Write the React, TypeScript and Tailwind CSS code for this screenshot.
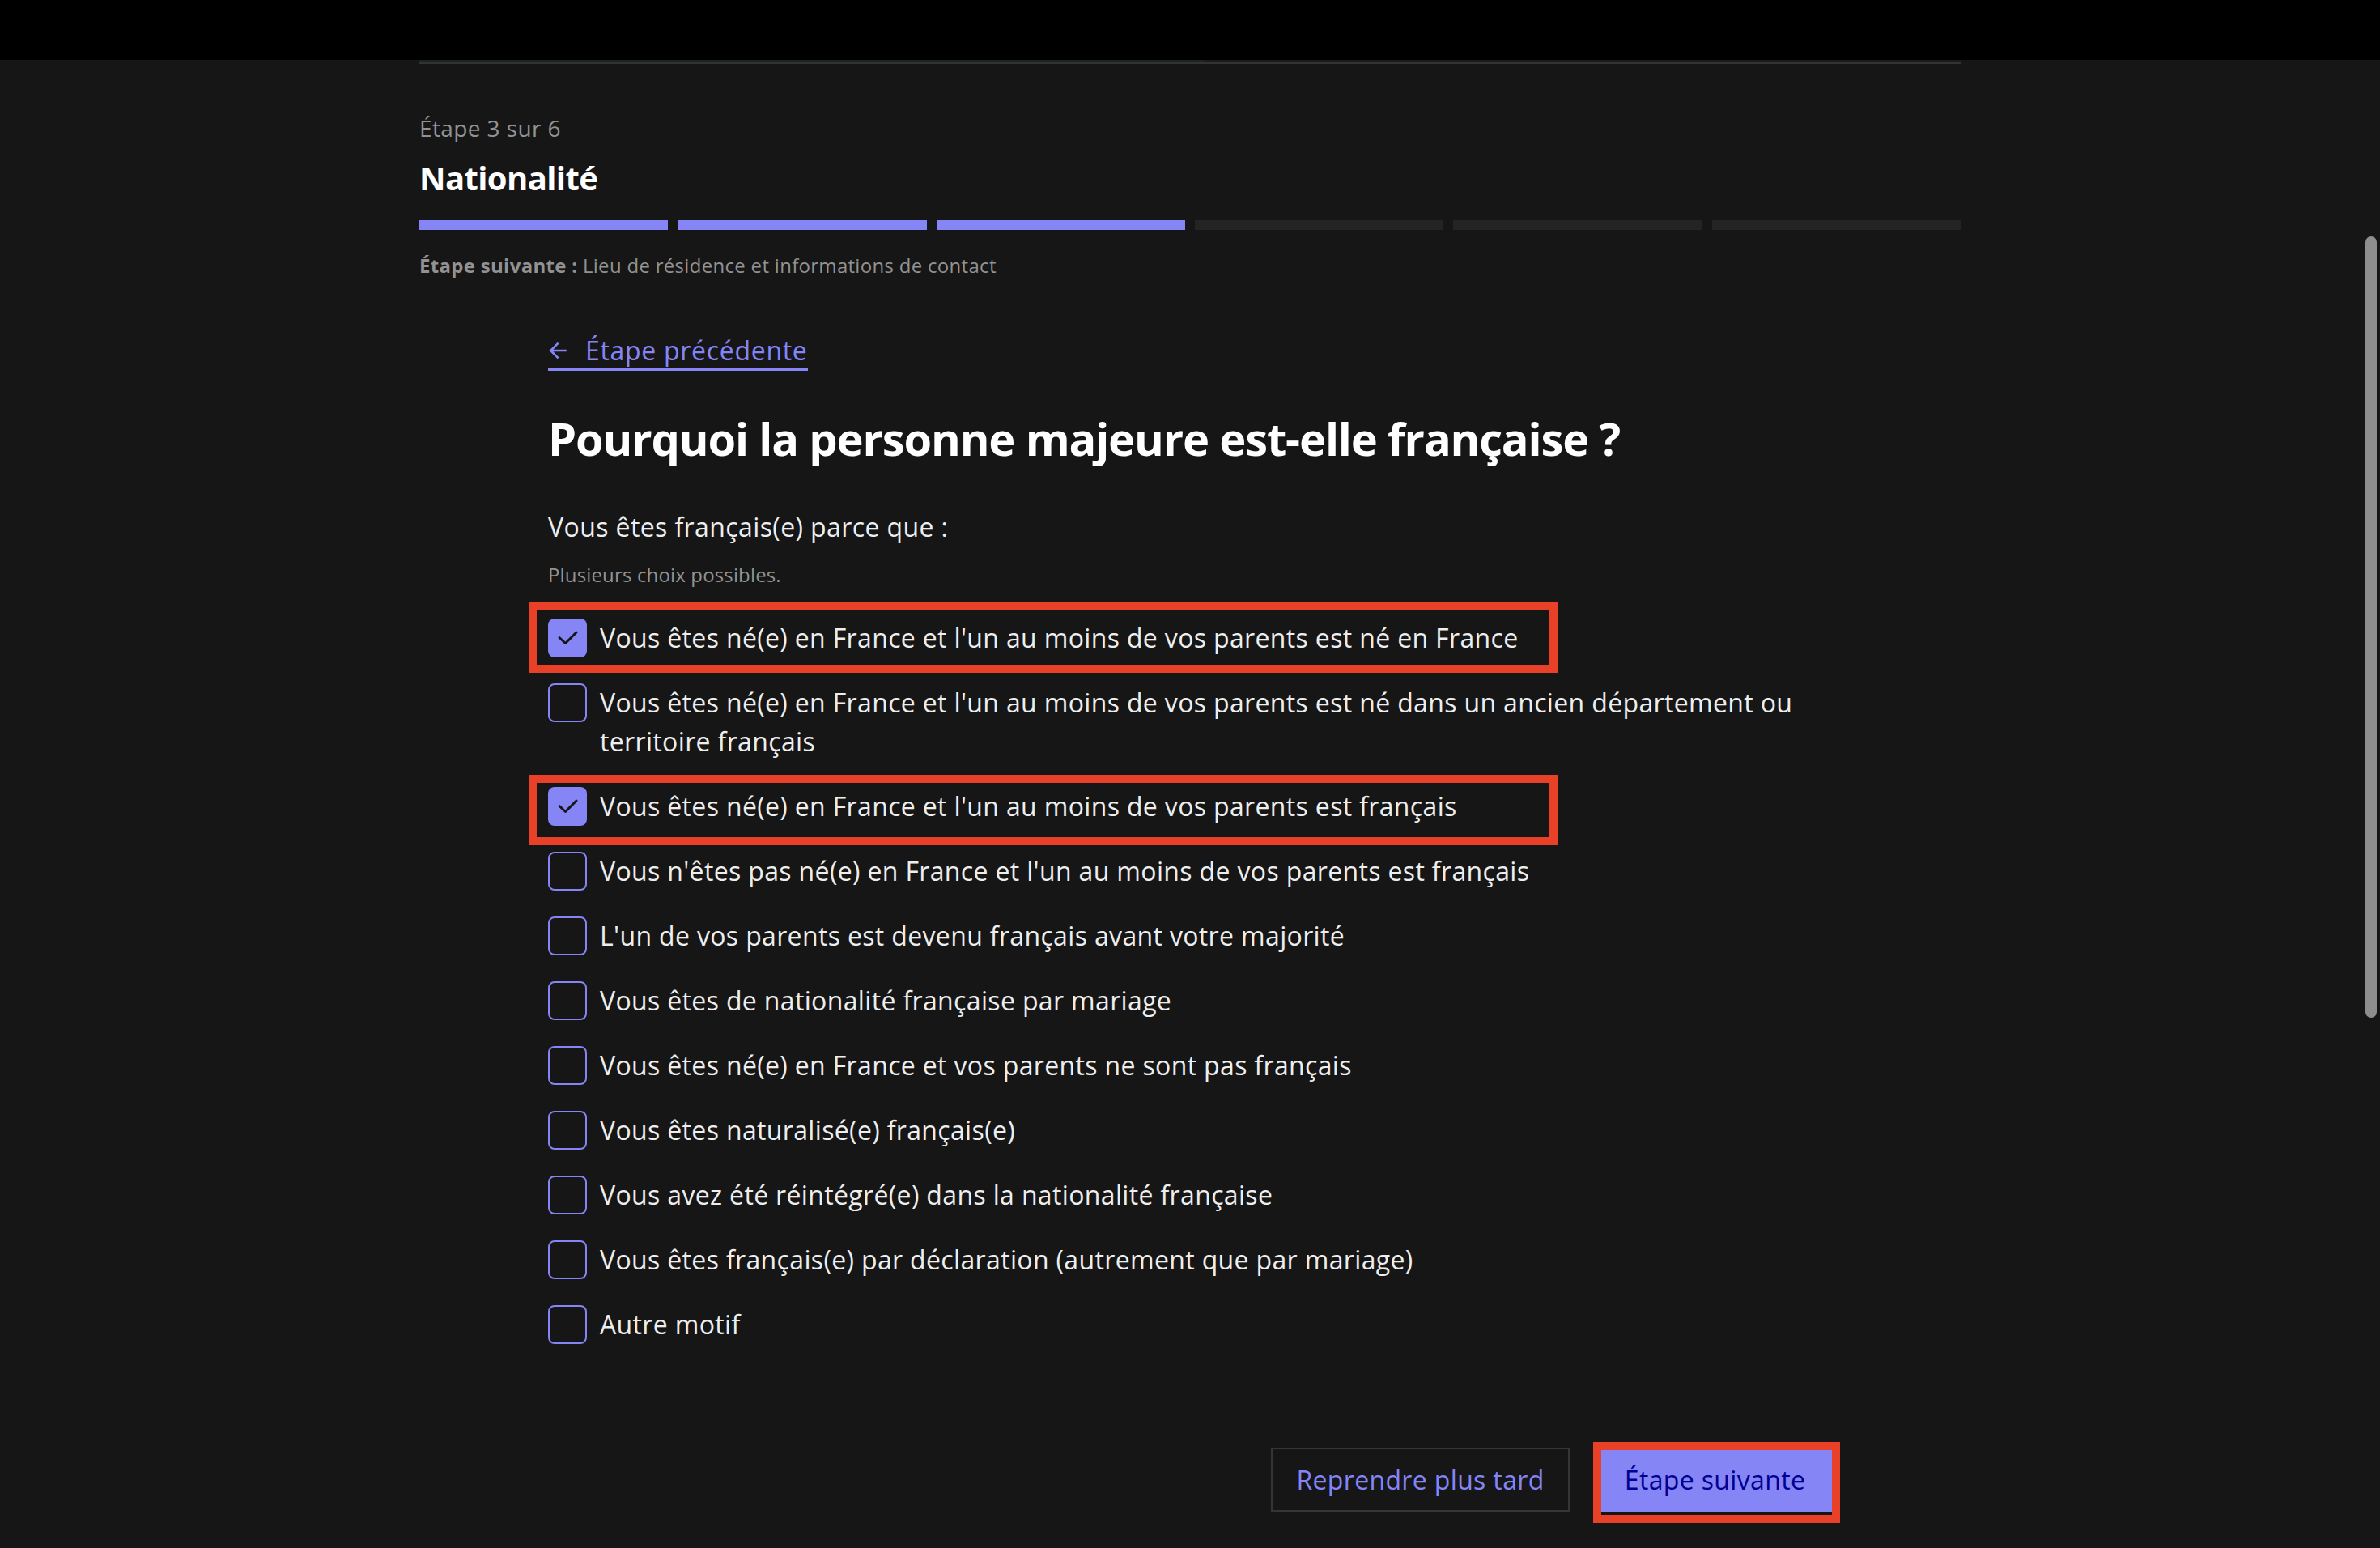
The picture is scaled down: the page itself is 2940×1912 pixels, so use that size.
import { RiArrowLeftLine } from "react-icons/ri";

type Option = { label: string; checked?: boolean; mark?: string };

const options: Option[] = [
  {
    label: "Vous êtes né(e) en France et l'un au moins de vos parents est né en France",
    checked: true,
    mark: "top-[-20px]",
  },
  {
    label:
      "Vous êtes né(e) en France et l'un au moins de vos parents est né dans un ancien département ou territoire français",
  },
  {
    label: "Vous êtes né(e) en France et l'un au moins de vos parents est français",
    checked: true,
    mark: "top-[-15px]",
  },
  { label: "Vous n'êtes pas né(e) en France et l'un au moins de vos parents est français" },
  { label: "L'un de vos parents est devenu français avant votre majorité" },
  { label: "Vous êtes de nationalité française par mariage" },
  { label: "Vous êtes né(e) en France et vos parents ne sont pas français" },
  { label: "Vous êtes naturalisé(e) français(e)" },
  { label: "Vous avez été réintégré(e) dans la nationalité française" },
  { label: "Vous êtes français(e) par déclaration (autrement que par mariage)" },
  { label: "Autre motif" },
];

function CheckBox({ checked }: { checked?: boolean }) {
  if (checked) {
    return (
      <span className="flex h-[48px] w-[48px] shrink-0 items-center justify-center rounded-[8px] bg-[#8585f6]">
        <svg width="48" height="48" viewBox="0 0 48 48" fill="none">
          <path d="M14 23.5l7.5 7L35 17" stroke="#161616" strokeWidth="3" strokeLinecap="round" strokeLinejoin="round" />
        </svg>
      </span>
    );
  }
  return <span className="h-[48px] w-[48px] shrink-0 rounded-[8px] border-2 border-[#8585f6]" />;
}

export default function App() {
  return (
    <div className="relative h-[1912px] w-full overflow-hidden bg-[#161616] font-['Open_Sans',sans-serif] tracking-[0.35px]">
      <div className="h-[74px] bg-black" />

      <div className="mx-auto w-[1904px]">
        <div className="flex h-[3px]">
          <div className="w-[971px] bg-[#1a2626]" />
          <div className="flex-1 bg-[#1c1c1c]" />
        </div>
        <div className="h-[2px] bg-[#333333]" />

        {/* stepper */}
        <div className="pt-[55px]">
          <p className="mb-[10px] text-[28px] leading-[48px] tracking-[0.4px] text-[#929292]">Étape 3 sur 6</p>
          <h2 className="mb-[24px] text-[40px] font-bold leading-[56px] tracking-[-0.6px] text-white">Nationalité</h2>
          <div className="mb-[24px] flex gap-[12px]">
            <div className="h-[12px] flex-1 bg-[#8585f6]" />
            <div className="h-[12px] flex-1 bg-[#8585f6]" />
            <div className="h-[12px] flex-1 bg-[#8585f6]" />
            <div className="h-[12px] flex-1 bg-[#242424]" />
            <div className="h-[12px] flex-1 bg-[#242424]" />
            <div className="h-[12px] flex-1 bg-[#242424]" />
          </div>
          <p className="text-[24px] leading-[40px] tracking-[0.3px] text-[#929292]">
            <span className="font-bold">Étape suivante :</span> Lieu de résidence et informations de contact
          </p>
        </div>

        {/* form */}
        <div className="ml-[159px] w-[1586px]">
          <a
            href="#"
            className="mt-[63px] inline-flex h-[47px] items-center border-b-[3px] border-[#8585f6] text-[32px] leading-[44px] tracking-[0.7px] text-[#8585f6]"
          >
            <RiArrowLeftLine className="ml-[-4px] mr-[18px] h-[32px] w-[32px]" />
            Étape précédente
          </a>

          <h1 className="mt-[47px] text-[56px] font-bold leading-[72px] tracking-[-1.15px] text-white">
            Pourquoi la personne majeure est-elle française ?
          </h1>

          <fieldset className="mt-[50px]">
            <legend className="text-[32px] leading-[48px] tracking-[0.4px] text-[#eeeeee]">
              Vous êtes français(e) parce que :
            </legend>
            <p className="mt-[15px] text-[24px] leading-[40px] tracking-[0.15px] text-[#929292]">
              Plusieurs choix possibles.
            </p>

            <div className="mt-[34px] flex flex-col gap-[32px]">
              {options.map((o) => (
                <label key={o.label} className="relative flex gap-[16px]">
                  <CheckBox checked={o.checked} />
                  <span className="text-[32px] leading-[48px] text-[#eeeeee]">{o.label}</span>
                  {o.mark && (
                    <span
                      className={`pointer-events-none absolute left-[-24px] h-[87px] w-[1271px] border-[10px] border-[#e94128] ${o.mark}`}
                    />
                  )}
                </label>
              ))}
            </div>
          </fieldset>

          <div className="mt-[128px] flex justify-end gap-[35px]">
            <button className="flex h-[79px] w-[369px] items-center justify-center border-2 border-[#353535] text-[32px] text-[#8585f6]">
              Reprendre plus tard
            </button>
            <div className="relative">
              <button className="flex h-[79px] w-[289px] items-center justify-center bg-[#8585f6] text-[32px] text-[#000091]">
                Étape suivante
              </button>
              <span className="pointer-events-none absolute bottom-[-14px] left-[-6px] right-[-10px] top-[-7px] border-[10px] border-[#e94128]" />
            </div>
          </div>
        </div>
      </div>

      {/* overlay scrollbar */}
      <div className="absolute left-[2922px] top-[292px] h-[965px] w-[14px] rounded-full bg-[#8e8e8e]" />
    </div>
  );
}
